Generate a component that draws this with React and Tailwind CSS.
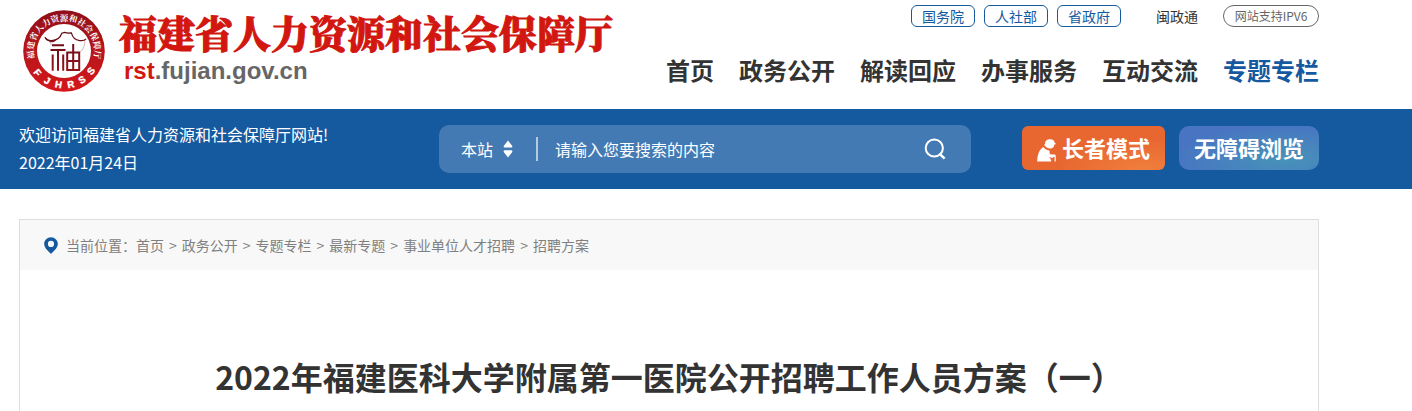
import React from "react";

const departments = ["国务院", "人社部", "省政府"];
const navItems = ["首页", "政务公开", "解读回应", "办事服务", "互动交流", "专题专栏"];
const crumbs = ["首页", "政务公开", "专题专栏", "最新专题", "事业单位人才招聘", "招聘方案"];

function Emblem() {
  return (
    <svg viewBox="0 0 82 82" className="size-[82px] shrink-0" role="img" aria-label="福建省人力资源和社会保障厅">
      <defs>
        <linearGradient id="ring" x1="0" y1="0" x2="0" y2="1">
          <stop offset="0" stopColor="#8e0f19" />
          <stop offset="0.5" stopColor="#b8161b" />
          <stop offset="1" stopColor="#d4171a" />
        </linearGradient>
        <linearGradient id="glyph" x1="0" y1="22" x2="0" y2="62" gradientUnits="userSpaceOnUse">
          <stop offset="0" stopColor="#5d0a14" />
          <stop offset="1" stopColor="#96131d" />
        </linearGradient>
        <path id="upper" d="M10.9 46 A30.5 30.5 0 1 1 71.1 46" />
      </defs>
      <circle cx="41" cy="41" r="40.8" fill="url(#ring)" />
      <circle cx="41" cy="41" r="27" fill="#fff" />
      <text fill="#fff" fontSize="8.5" fontWeight="700" fontFamily="'Noto Serif CJK SC','Noto Sans CJK SC',serif" textAnchor="middle">
        <textPath href="#upper" startOffset="50%">福建省人力资源和社会保障厅</textPath>
      </text>
      {[
        ["F", 14.6, 62.6, 51],
        ["J", 24.2, 70.6, 30],
        ["H", 35.6, 74.4, 10],
        ["R", 47.8, 74.2, -11],
        ["S", 59, 69.6, -32],
        ["S", 68, 61, -54],
      ].map(([c, x, y, r], i) => (
        <text key={i} x={x} y={y} dy="3.4" transform={`rotate(${r} ${x} ${y})`} textAnchor="middle" fill="#fff" stroke="#fff" strokeWidth="0.4" fontSize="9.6" fontWeight="700" fontFamily="'Liberation Sans',sans-serif">
          {c}
        </text>
      ))}
      <g fill="none" stroke="url(#glyph)">
        <path d="M22 27.2 C23.4 30.4 26 31 29 30.6 C34 30 37.6 27 38.8 23.2 L41.6 22.4 L45 23.2 L48.4 22.8 C49.4 27 52.5 30 56.6 30.6 C59.6 31 61.8 30.4 63 28.8" strokeWidth="1.2" />
        <path d="M22 27 C24.2 30.2 30 31.8 34 29 C31 33.4 25.6 33.4 22 27Z" fill="#7b0f19" strokeWidth="0.4" />
        <path d="M62 30 C61.8 35 60.5 39.8 57 42 M27 32 L28.5 35" strokeWidth="0.5" opacity="0.6" />
        <path d="M29 35.2h12M27.5 40h15M35 40v20.8M29.7 44.6v16.2M40.2 44.6v16.2" strokeWidth="2" />
        <path d="M44.2 60.8V42.4h12v18.4M50.2 34v26M44.2 51h12M43.2 60h14" strokeWidth="2" />
      </g>
    </svg>
  );
}

function ElderIcon() {
  return (
    <svg viewBox="0 0 19 23" className="h-[23px] w-[19px] shrink-0" fill="#fff" aria-hidden="true">
      <path d="M8 5.2 C8 1.6 10.4 .3 13.4 .3 C16 .3 17.4 1.8 17.6 3.4 L19 5 L17.2 5.8 C17 8.3 15.6 9.6 13.6 9.6 C10.6 9.6 8.6 7.8 7 6Z" />
      <path d="M6.2 8 C8 10.2 10.4 11.1 12.4 11.6 L12.8 15.2 L17.6 15.6 C18.6 16 18.8 16.8 18.8 17.8 V22.4 H17.6 V17.8 H16.6 L15.8 19 L12 18 C13.6 19.4 14.2 21 14.2 22.4 H.2 C.2 16 2.2 10.8 6.2 8Z" />
    </svg>
  );
}

export default function App() {
  return (
    <div className="min-w-[1320px] bg-white font-['Noto_Sans_CJK_SC',sans-serif] text-[#333]">
      <header className="pl-[19px]">
        <div className="flex h-[109px] w-full max-w-[1300px] justify-between">
          <div className="flex pl-1">
            <div className="pt-[10px]">
              <Emblem />
            </div>
            <a href="#home" className="flex flex-col pt-[7px] pl-[14px]">
              <span className="font-['Noto_Serif_CJK_SC','Noto_Sans_CJK_SC',serif] text-[38px] leading-[50px] font-black whitespace-nowrap text-[#d1170f] [-webkit-text-stroke:1px_#d1170f]">
                福建省人力资源和社会保障厅
              </span>
              <span className="pl-[5px] font-['Liberation_Sans',sans-serif] text-2xl leading-[28px] font-bold text-[#666]">
                <span className="text-[#d1170f]">rst</span>.fujian.gov.cn
              </span>
            </a>
          </div>
          <div className="flex flex-col items-end pt-[5px]">
            <div className="flex items-center text-sm">
              <div className="flex gap-[9px]">
                {departments.map((d) => (
                  <a key={d} href="#dept" className="flex h-[22px] w-16 items-center justify-center rounded-md border border-[#15599f] text-[#15599f]">
                    {d}
                  </a>
                ))}
              </div>
              <a href="#mzt" className="ml-[35px]">闽政通</a>
              <a href="#ipv6" className="ml-[25px] flex h-[22px] w-24 items-center justify-center rounded-full border border-[#666] text-xs text-[#666]">
                网站支持IPV6
              </a>
            </div>
            <nav className="mt-[25px] flex gap-[25px] text-2xl leading-[36px] font-bold whitespace-nowrap">
              {navItems.map((n, i) => (
                <a key={n} href="#nav" className={i === 5 ? "text-[#15599f]" : ""}>
                  {n}
                </a>
              ))}
            </nav>
          </div>
        </div>
      </header>

      <div className="bg-[#15599f] pl-[19px] text-white">
        <div className="flex h-20 w-full max-w-[1300px] items-center">
          <div className="w-[420px] pb-0.5 text-base leading-[28px]">
            <p>欢迎访问福建省人力资源和社会保障厅网站!</p>
            <p>2022年01月24日</p>
          </div>
          <form className="flex h-12 flex-1 items-center rounded-[10px] bg-[#447ab3] pr-5 pl-[22px]" onSubmit={(e) => e.preventDefault()}>
            <div className="flex items-center gap-2">
              <select aria-label="搜索范围" className="w-[34px] appearance-none bg-transparent text-base text-white outline-none">
                <option>本站</option>
              </select>
              <svg viewBox="0 0 10 18" className="h-[18px] w-[10px]" fill="#fff" aria-hidden="true">
                <path d="M5 .5 L9.3 6 Q9.6 7.4 8.4 7.4 H1.6 Q.4 7.4 .7 6Z M5 17.5 L9.3 12 Q9.6 10.2 8.4 10.2 H1.6 Q.4 10.2 .7 12Z" />
              </svg>
            </div>
            <span className="ml-[23px] h-6 w-[2px] bg-[#b4cae1]" />
            <input type="text" aria-label="搜索内容" placeholder="请输入您要搜索的内容" className="ml-[17px] min-w-0 flex-1 bg-transparent text-base text-white outline-none placeholder:text-white" />
            <button type="submit" aria-label="搜索" className="flex size-8 items-center justify-center">
              <svg viewBox="0 0 24 24" className="size-6" fill="none" stroke="#fff" strokeWidth="2" aria-hidden="true">
                <circle cx="11.3" cy="11" r="8.6" />
                <path d="M16.4 16.6 L21.6 21.6" strokeWidth="2.6" />
              </svg>
            </button>
          </form>
          <div className="ml-[51px] flex gap-[14px] pb-0.5 text-[22px] font-bold whitespace-nowrap">
            <button type="button" className="flex h-11 w-[143px] items-center justify-center gap-1.5 rounded-md bg-[radial-gradient(ellipse_at_85%_100%,#f07f3c_0%,#e86731_50%)] pb-0.5">
              <span className="pt-1.5"><ElderIcon /></span>
              长者模式
            </button>
            <button type="button" className="h-11 w-[140px] rounded-[10px] bg-[radial-gradient(ellipse_at_75%_75%,#4793b9_0%,#4874c2_75%)] pb-0.5">
              无障碍浏览
            </button>
          </div>
        </div>
      </div>

      <main className="pt-[30px] pl-[19px]">
        <div className="w-full max-w-[1300px] border border-b-0 border-[#ddd]">
          <nav aria-label="当前位置" className="flex h-[50px] items-center bg-[#f8f8f8] pl-6 text-sm text-[#808080]">
            <svg viewBox="0 0 14 17" className="h-[17px] w-[14px]" aria-hidden="true">
              <path fillRule="evenodd" fill="#15599f" d="M7 .2 C10.8 .2 13.8 3.2 13.8 6.8 C13.8 10.8 10.4 13.4 8 16 Q7 17 6 16 C3.6 13.4 .2 10.8 .2 6.8 C.2 3.2 3.2 .2 7 .2Z M7 3.8 A3.1 3.1 0 1 0 7 10 A3.1 3.1 0 1 0 7 3.8Z" />
            </svg>
            <span className="ml-2">当前位置：</span>
            {crumbs.map((c, i) => (
              <React.Fragment key={c}>
                {i > 0 && <span className="mx-[5px]">&gt;</span>}
                <a href="#crumb">{c}</a>
              </React.Fragment>
            ))}
          </nav>
          <h1 className="pt-[82px] pb-[11px] text-center text-[32px] leading-[48px] font-bold">
            2022年福建医科大学附属第一医院公开招聘工作人员方案（一）
          </h1>
        </div>
      </main>
    </div>
  );
}
